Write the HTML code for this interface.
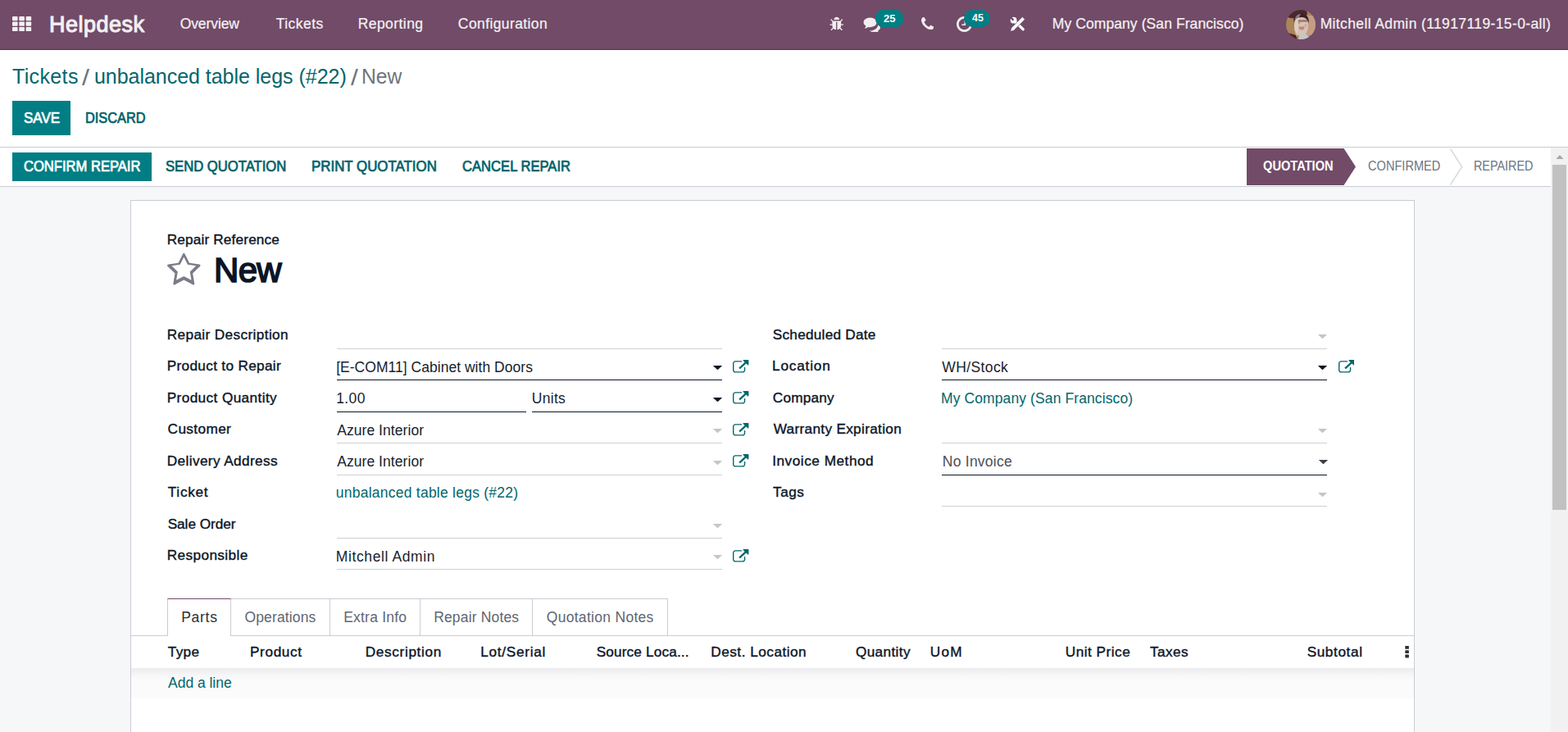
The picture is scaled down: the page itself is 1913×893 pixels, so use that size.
<!DOCTYPE html>
<html lang="en"><head><meta charset="utf-8"><title>Odoo - New</title>
<style>
html,body{margin:0;padding:0}
body{width:1913px;height:893px;overflow:hidden;position:relative;background:#fff;font-family:"Liberation Sans", sans-serif;}
.bx,.t,.ic{position:absolute;display:block}
.t{white-space:pre;line-height:1;margin:0;padding:0;transform-origin:0 0}
.m{-webkit-text-stroke:0.022em currentColor}
.b{font-weight:700}
.n{-webkit-text-stroke:0.014em currentColor}
.mm{-webkit-text-stroke:0.04em currentColor}
</style></head><body>

<main>
<div class="bx" style="left:0px;top:180px;width:1913px;height:713px;background:#f6f7f9;"></div>
<div class="bx" style="left:159px;top:244px;width:1567px;height:660px;background:#fff;border:1px solid #c9ccd3;box-sizing:border-box;"></div>
</main>
<nav>
<div class="bx" style="left:0px;top:0px;width:1913px;height:60px;background:#714B67;"></div>
<div class="bx" style="left:0px;top:60px;width:1913px;height:1px;background:#4f3448;"></div>
<svg class="ic" style="left:14.9px;top:19.9px" width="24" height="19" viewBox="0 0 24 19" ><rect x="0.00" y="0.00" width="6.6" height="5.2" rx="0.9" fill="#f3eff2"/><rect x="8.30" y="0.00" width="6.6" height="5.2" rx="0.9" fill="#f3eff2"/><rect x="16.60" y="0.00" width="6.6" height="5.2" rx="0.9" fill="#f3eff2"/><rect x="0.00" y="6.45" width="6.6" height="5.2" rx="0.9" fill="#f3eff2"/><rect x="8.30" y="6.45" width="6.6" height="5.2" rx="0.9" fill="#f3eff2"/><rect x="16.60" y="6.45" width="6.6" height="5.2" rx="0.9" fill="#f3eff2"/><rect x="0.00" y="12.90" width="6.6" height="5.2" rx="0.9" fill="#f3eff2"/><rect x="8.30" y="12.90" width="6.6" height="5.2" rx="0.9" fill="#f3eff2"/><rect x="16.60" y="12.90" width="6.6" height="5.2" rx="0.9" fill="#f3eff2"/></svg>
<span id="brand" class="t mm" style="left:60.04px;top:16.75px;font-size:27px;color:#f3eff2;letter-spacing:0.486px">Helpdesk</span><span id="m1" class="t n" style="left:219.66px;top:20.50px;font-size:17.5px;color:#f3eff2;letter-spacing:-0.084px">Overview</span><span id="m2" class="t n" style="left:336.76px;top:20.50px;font-size:17.5px;color:#f3eff2;letter-spacing:0.456px">Tickets</span><span id="m3" class="t n" style="left:436.64px;top:20.50px;font-size:17.5px;color:#f3eff2;letter-spacing:0.446px">Reporting</span><span id="m4" class="t n" style="left:558.86px;top:20.50px;font-size:17.5px;color:#f3eff2;letter-spacing:0.397px">Configuration</span>
<svg class="ic" style="left:1012px;top:19.5px" width="17.5" height="17.5" viewBox="0 0 1664 1664" ><path d="M1632 960q0 26-19 45t-45 19h-224q0 171-67 290l208 209q19 19 19 45t-19 45q-18 19-45 19t-45-19l-198-197q-5 5-15 13t-42 28.500-65 36.500-82 29-97 13v-896h-128v896q-51 0-101.500-13.500t-87-33-66-39-43.500-32.500l-15-14-183 207q-20 21-48 21-24 0-43-16-19-18-20.500-44.500t15.500-46.500l202-227q-58-114-58-274h-224q-26 0-45-19t-19-45 19-45 45-19h224v-294l-173-173q-19-19-19-45t19-45 45-19 45 19l173 173h844l173-173q19-19 45-19t45 19 19 45-19 45l-173 173v294h224q26 0 45 19t19 45zM1152 384h-640q0-133 93.500-226.500t226.500-93.500 226.500 93.500 93.500 226.500z" fill="#f1edf0"/></svg>
<svg class="ic" style="left:1053px;top:20.2px" width="21.5" height="19" viewBox="0 128 1792 1664" ><path d="M1408 768q0 139-94 257t-256.500 186.500-353.500 68.500q-86 0-176-16-124 88-278 128-36 9-86 16h-3q-11 0-20.500-8t-11.500-21q-1-3-1-6.500t.5-6.500 2-6l2.500-5 3.500-5.500 4-5 4.500-5 4-4.500q5-6 23-25t26-29.500 22.500-29 25-38.500 20.500-44q-124-72-195-177t-71-224q0-139 94-257t256.500-186.500 353.500-68.500 353.500 68.500 256.500 186.500 94 257zM1792 1280q0 120-71 224.500t-195 176.500q10 24 20.500 44t25 38.500 22.500 29 26 29.500 23 25q1 1 4 4.500t4.500 5 4 5 3.500 5.500l2.500 5 2 6 .5 6.500-1 6.500q-3 14-13 22t-22 7q-50-7-86-16-154-40-278-128-90 16-176 16-271 0-472-132 58 4 88 4 161 0 309-45t264-129q125-92 192-212t67-254q0-77-23-152 129 71 204 178t75 230z" fill="#f1edf0"/></svg>
<svg class="ic" style="left:1124px;top:20.7px" width="15.3" height="15.3" viewBox="0 128 1408 1408" ><path d="M1408 1240q0 27-10 70.500t-21 68.500q-21 50-122 106-94 51-186 51-27 0-52.500-3.500t-57.500-12.500-47.500-14.500-55.500-20.500-49-18q-98-35-175-83-128-79-264.500-215.500t-215.500-264.500q-48-77-83-175-3-9-18-49t-20.500-55.500-14.500-47.500-12.500-57.500-3.500-52.500q0-92 51-186 56-101 106-122 25-11 68.500-21t70.500-10q14 0 21 3 18 6 53 76 11 19 30 54t35 63.500 31 53.500q3 4 17.500 25t21.500 35.500 7 28.500q0 20-28.500 50t-62 55-62 53-28.500 46q0 9 5 22.500t8.500 20.500 14 24 11.500 19q76 137 174 235t235 174q2 1 19 11.500t24 14 20.500 8.500 22.500 5q18 0 46-28.500t53-62 55-62 50-28.500q14 0 28.500 7t35.500 21.500 25 17.500q25 15 53.500 31t63.500 35 54 30q70 35 76 53 3 7 3 21z" fill="#f1edf0"/></svg>
<svg class="ic" style="left:1167px;top:20px" width="19" height="19" viewBox="0 128 1536 1536" ><path d="M896 544v448q0 14-9 23t-23 9h-320q-14 0-23-9t-9-23v-64q0-14 9-23t23-9h224v-352q0-14 9-23t23-9h64q14 0 23 9t9 23zM1312 896q0-148-73-273t-198-198-273-73-273 73-198 198-73 273 73 273 198 198 273 73 273-73 198-198 73-273zM1536 896q0 209-103 385.500t-279.500 279.500-385.500 103-385.500-103-279.500-279.500-103-385.500 103-385.500 279.500-279.500 385.500-103 385.500 103 279.500 279.500 103 385.500z" fill="#f1edf0"/></svg>
<svg class="ic" style="left:1232px;top:20px" width="19" height="19" viewBox="0 0 19 19" ><path d="M4.400 4.400L16.200 15.800" stroke="#fff" stroke-width="3.300" stroke-linecap="round" fill="none"/><circle cx="4.600" cy="4.700" r="3.900" fill="#fff"/><path d="M-0.500 -0.400L3.700 3.800" stroke="#714B67" stroke-width="2.500" stroke-linecap="round"/><path d="M15.300 0.600L18.400 3.700L4.900 17.200L0.700 18.300L1.800 14.100z" fill="#fff" stroke="#714B67" stroke-width="0.700" stroke-linejoin="round"/></svg>
<div class="bx" style="left:1068px;top:11px;width:34px;height:22.5px;background:#017e84;border-radius:11.5px;"></div>
<div class="bx" style="left:1176px;top:12px;width:32px;height:21.3px;background:#017e84;border-radius:10.6px;"></div>
<span id="b25" class="t b" style="left:1078.00px;top:16.00px;font-size:13.5px;color:#fff;transform:scaleX(0.9672)">25</span><span id="b45" class="t b" style="left:1185.60px;top:14.90px;font-size:13.5px;color:#fff;transform:scaleX(0.9221)">45</span>
<span id="comp" class="t n" style="left:1283.73px;top:20.50px;font-size:17.5px;color:#f3eff2;letter-spacing:0.089px">My Company (San Francisco)</span>
<svg class="ic" style="left:1568.7px;top:11.7px" width="36" height="36" viewBox="0 0 36 36" ><defs><clipPath id="av"><circle cx="18" cy="18" r="18"/></clipPath></defs>
<g clip-path="url(#av)"><rect width="36" height="36" fill="#ab8457"/>
<rect x="23" y="7" width="13" height="24" fill="#c59c85"/>
<ellipse cx="11" cy="4" rx="15" ry="6.500" fill="#4a2730"/>
<path d="M2 28q4 8 12 9l-2-6z" fill="#4a2228"/>
<ellipse cx="18.500" cy="19.500" rx="8.500" ry="13" fill="#d8c2b3"/>
<path d="M9.500 15q-1-10.500 9.500-10.500q9 0 9 12.500q-2-8-9-8q-7 0-9.500 6z" fill="#3d1f29"/>
<path d="M11 10q2-5 7-5q-3 4-3 16q-2 6-1 12q-4-3-4-12z" fill="#e6e1e1" opacity=".45"/>
<rect x="14.500" y="12.300" width="12" height="2.400" rx="1.200" fill="#6e4a3e" opacity=".6"/>
<path d="M15.500 20q3.500 1 7 0q0 4.500-3.500 4.500q-3.500 0-3.500-4.500z" fill="#a8575f" opacity=".55"/><circle cx="16" cy="16" r="1.600" fill="#c98a4a" opacity=".6"/><circle cx="24" cy="19" r="1.500" fill="#d9945a" opacity=".6"/>
<path d="M15 36q0-7 6-7q7 1 8 7z" fill="#c3c7cb"/></g></svg>
<span id="user" class="t n" style="left:1610.64px;top:20.50px;font-size:17.5px;color:#f3eff2;letter-spacing:0.379px">Mitchell Admin (11917119-15-0-all)</span>
</nav>
<header>
<span id="bc1" class="t r" style="left:14.98px;top:81.00px;font-size:25px;color:#01666b;letter-spacing:0.367px">Tickets</span><span id="bc2" class="t r" style="left:100.40px;top:80.50px;font-size:27.5px;color:#6c757d;transform:scaleX(1.1842)">/</span><span id="bc3" class="t r" style="left:114.89px;top:81.00px;font-size:25px;color:#01666b;letter-spacing:-0.027px">unbalanced table legs (#22)</span><span id="bc4" class="t r" style="left:428.01px;top:80.50px;font-size:27.5px;color:#6c757d;transform:scaleX(1.1543)">/</span><span id="bc5" class="t r" style="left:441.47px;top:81.00px;font-size:25px;color:#6c757d;transform:scaleX(0.9871)">New</span>
<div class="bx" style="left:15px;top:123px;width:71px;height:42px;background:#017e84;"></div>
<span id="save" class="t mm" style="left:28.59px;top:136.00px;font-size:17.5px;color:#fff;transform:scaleX(0.9731)">SAVE</span><span id="discard" class="t mm" style="left:104.42px;top:136.00px;font-size:17.5px;color:#01626a;transform:scaleX(0.9349)">DISCARD</span>
<div class="bx" style="left:0px;top:179px;width:1913px;height:1px;background:#c9ccd3;"></div>
<div class="bx" style="left:0px;top:180px;width:1892px;height:47px;background:#fff;"></div>
<div class="bx" style="left:0px;top:227px;width:1892px;height:1px;background:#c9ccd3;"></div>
<div class="bx" style="left:15px;top:186px;width:170px;height:35px;background:#017e84;"></div>
<span id="confirm" class="t mm" style="left:28.55px;top:194.75px;font-size:17.5px;color:#fff;transform:scaleX(0.9468)">CONFIRM REPAIR</span><span id="send" class="t mm" style="left:202.12px;top:194.75px;font-size:17.5px;color:#01626a;transform:scaleX(0.9508)">SEND QUOTATION</span><span id="print" class="t mm" style="left:380.39px;top:194.75px;font-size:17.5px;color:#01626a;transform:scaleX(0.9644)">PRINT QUOTATION</span><span id="cancel" class="t mm" style="left:564.44px;top:194.75px;font-size:17.5px;color:#01626a;transform:scaleX(0.9495)">CANCEL REPAIR</span>
<svg class="ic" style="left:1521px;top:181px" width="134" height="45" viewBox="0 0 134 45" ><path d="M0 0H118.500L133 22.500L118.500 45H0z" fill="#714B67"/></svg>
<svg class="ic" style="left:1766px;top:181px" width="20" height="45" viewBox="0 0 20 45" ><path d="M3.500 0.500L17.500 22.500L3.500 44.500" fill="none" stroke="#cfd2da" stroke-width="1.300"/></svg>
<span id="st1" class="t b" style="left:1541.42px;top:193.75px;font-size:16.25px;color:#fff;transform:scaleX(0.9006)">QUOTATION</span><span id="st2" class="t r" style="left:1668.95px;top:193.75px;font-size:16.25px;color:#6c7480;transform:scaleX(0.8979)">CONFIRMED</span><span id="st3" class="t r" style="left:1798.38px;top:193.75px;font-size:16.25px;color:#6c7480;transform:scaleX(0.8839)">REPAIRED</span>
</header>
<section>
<span id="lref" class="t m" style="left:203.74px;top:283.50px;font-size:17.2px;color:#0b1526;letter-spacing:0.165px">Repair Reference</span>
<svg class="ic" style="left:204px;top:306.5px" width="40.6" height="43.75" viewBox="0 0 1664 1792" ><path d="M1137 1004l306-297-422-62-189-382-189 382-422 62 306 297-73 421 378-199 377 199zM1664 685q0 22-26 48l-363 354 86 500q1 7 1 20 0 50-41 50-19 0-40-12l-449-236-449 236q-22 12-40 12-21 0-31.500-14.500t-10.500-35.500q0-6 2-20l86-500-364-354q-25-27-25-48 0-37 56-46l502-73 225-455q19-41 49-41t49 41l225 455 502 73q56 9 56 46z" fill="#7c7b87"/></svg>
<span id="h1" class="t mm" style="left:260.97px;top:309.00px;font-size:42px;color:#0b1526;letter-spacing:-0.660px">New</span>
<span id="l0" class="t m" style="left:203.74px;top:400.00px;font-size:17.2px;color:#0b1526;letter-spacing:0.383px">Repair Description</span>
<span id="l1" class="t m" style="left:203.74px;top:438.00px;font-size:17.2px;color:#0b1526;letter-spacing:0.328px">Product to Repair</span>
<span id="l2" class="t m" style="left:203.74px;top:477.00px;font-size:17.2px;color:#0b1526;letter-spacing:0.393px">Product Quantity</span>
<span id="l3" class="t m" style="left:204.61px;top:515.00px;font-size:17.2px;color:#0b1526;letter-spacing:0.385px">Customer</span>
<span id="l4" class="t m" style="left:203.74px;top:554.00px;font-size:17.2px;color:#0b1526;letter-spacing:0.395px">Delivery Address</span>
<span id="l5" class="t m" style="left:204.75px;top:592.00px;font-size:17.2px;color:#0b1526;letter-spacing:0.737px">Ticket</span>
<span id="l6" class="t m" style="left:204.63px;top:631.00px;font-size:17.2px;color:#0b1526;letter-spacing:-0.029px">Sale Order</span>
<span id="l7" class="t m" style="left:203.74px;top:669.00px;font-size:17.2px;color:#0b1526;letter-spacing:0.394px">Responsible</span>
<span id="v1" class="t r" style="left:410.18px;top:440.00px;font-size:17.5px;color:#171e2c;letter-spacing:0.029px">[E-COM11] Cabinet with Doors</span>
<span id="v2" class="t r" style="left:410.22px;top:478.00px;font-size:17.5px;color:#171e2c;letter-spacing:0.370px">1.00</span>
<span id="v2b" class="t r" style="left:648.87px;top:478.00px;font-size:17.5px;color:#171e2c;letter-spacing:0.286px">Units</span>
<span id="v3" class="t r" style="left:411.16px;top:517.00px;font-size:17.5px;color:#171e2c;letter-spacing:0.065px">Azure Interior</span>
<span id="v4" class="t r" style="left:411.16px;top:555.00px;font-size:17.5px;color:#171e2c;letter-spacing:0.065px">Azure Interior</span>
<span id="v5" class="t r" style="left:409.74px;top:593.00px;font-size:17.5px;color:#01666b;letter-spacing:0.246px">unbalanced table legs (#22)</span>
<span id="v7" class="t r" style="left:409.81px;top:671.00px;font-size:17.5px;color:#171e2c;letter-spacing:0.607px">Mitchell Admin</span>
<div class="bx" style="left:410.5px;top:425px;width:470.5px;height:1px;background:#cfd1d6;"></div>
<div class="bx" style="left:410.5px;top:463px;width:470.5px;height:1px;background:#0b1526;"></div>
<div class="bx" style="left:410.5px;top:502px;width:231.25px;height:1px;background:#0b1526;"></div>
<div class="bx" style="left:649.25px;top:502px;width:231.75px;height:1px;background:#0b1526;"></div>
<div class="bx" style="left:410.5px;top:540px;width:470.5px;height:1px;background:#cfd1d6;"></div>
<div class="bx" style="left:410.5px;top:579px;width:470.5px;height:1px;background:#cfd1d6;"></div>
<div class="bx" style="left:410.5px;top:656px;width:470.5px;height:1px;background:#cfd1d6;"></div>
<div class="bx" style="left:410.5px;top:694px;width:470.5px;height:1px;background:#cfd1d6;"></div>
<svg class="ic" style="left:870px;top:445.8px" width="11" height="5.2" viewBox="0 0 11 6" preserveAspectRatio="none"><path d="M0.6 0h9.8q0.9 0 0.3 0.7l-4.6 4.9q-0.6 0.6-1.2 0l-4.6-4.9q-0.6-0.7 0.3-0.7z" fill="#0b1526"/></svg>
<svg class="ic" style="left:894.25px;top:438.7px" width="19.4" height="16.8" viewBox="0 0 1792 1664" preserveAspectRatio="none"><path d="M1408 928v320q0 119-84.500 203.500t-203.500 84.500h-832q-119 0-203.500-84.500t-84.500-203.500v-832q0-119 84.500-203.500t203.500-84.500h704q14 0 23 9t9 23v64q0 14-9 23t-23 9h-704q-66 0-113 47t-47 113v832q0 66 47 113t113 47h832q66 0 113-47t47-113v-320q0-14 9-23t23-9h64q14 0 23 9t9 23zM1792 64v512q0 26-19 45t-45 19-45-19l-176-176-652 652q-10 10-23 10t-23-10l-114-114q-10-10-10-23t10-23l652-652-176-176q-19-19-19-45t19-45 45-19h512q26 0 45 19t19 45z" fill="#01666b"/></svg>
<svg class="ic" style="left:870px;top:484.8px" width="11" height="5.2" viewBox="0 0 11 6" preserveAspectRatio="none"><path d="M0.6 0h9.8q0.9 0 0.3 0.7l-4.6 4.9q-0.6 0.6-1.2 0l-4.6-4.9q-0.6-0.7 0.3-0.7z" fill="#0b1526"/></svg>
<svg class="ic" style="left:894.25px;top:477.2px" width="19.4" height="16.8" viewBox="0 0 1792 1664" preserveAspectRatio="none"><path d="M1408 928v320q0 119-84.500 203.500t-203.500 84.500h-832q-119 0-203.500-84.500t-84.500-203.500v-832q0-119 84.500-203.500t203.500-84.500h704q14 0 23 9t9 23v64q0 14-9 23t-23 9h-704q-66 0-113 47t-47 113v832q0 66 47 113t113 47h832q66 0 113-47t47-113v-320q0-14 9-23t23-9h64q14 0 23 9t9 23zM1792 64v512q0 26-19 45t-45 19-45-19l-176-176-652 652q-10 10-23 10t-23-10l-114-114q-10-10-10-23t10-23l652-652-176-176q-19-19-19-45t19-45 45-19h512q26 0 45 19t19 45z" fill="#01666b"/></svg>
<svg class="ic" style="left:870px;top:523.3px" width="11" height="5.2" viewBox="0 0 11 6" preserveAspectRatio="none"><path d="M0.6 0h9.8q0.9 0 0.3 0.7l-4.6 4.9q-0.6 0.6-1.2 0l-4.6-4.9q-0.6-0.7 0.3-0.7z" fill="#c4c6cb"/></svg>
<svg class="ic" style="left:894.25px;top:515.7px" width="19.4" height="16.8" viewBox="0 0 1792 1664" preserveAspectRatio="none"><path d="M1408 928v320q0 119-84.500 203.500t-203.500 84.500h-832q-119 0-203.500-84.500t-84.500-203.500v-832q0-119 84.500-203.500t203.500-84.500h704q14 0 23 9t9 23v64q0 14-9 23t-23 9h-704q-66 0-113 47t-47 113v832q0 66 47 113t113 47h832q66 0 113-47t47-113v-320q0-14 9-23t23-9h64q14 0 23 9t9 23zM1792 64v512q0 26-19 45t-45 19-45-19l-176-176-652 652q-10 10-23 10t-23-10l-114-114q-10-10-10-23t10-23l652-652-176-176q-19-19-19-45t19-45 45-19h512q26 0 45 19t19 45z" fill="#01666b"/></svg>
<svg class="ic" style="left:870px;top:561.8px" width="11" height="5.2" viewBox="0 0 11 6" preserveAspectRatio="none"><path d="M0.6 0h9.8q0.9 0 0.3 0.7l-4.6 4.9q-0.6 0.6-1.2 0l-4.6-4.9q-0.6-0.7 0.3-0.7z" fill="#c4c6cb"/></svg>
<svg class="ic" style="left:894.25px;top:554.2px" width="19.4" height="16.8" viewBox="0 0 1792 1664" preserveAspectRatio="none"><path d="M1408 928v320q0 119-84.500 203.500t-203.500 84.500h-832q-119 0-203.500-84.500t-84.500-203.500v-832q0-119 84.500-203.500t203.500-84.500h704q14 0 23 9t9 23v64q0 14-9 23t-23 9h-704q-66 0-113 47t-47 113v832q0 66 47 113t113 47h832q66 0 113-47t47-113v-320q0-14 9-23t23-9h64q14 0 23 9t9 23zM1792 64v512q0 26-19 45t-45 19-45-19l-176-176-652 652q-10 10-23 10t-23-10l-114-114q-10-10-10-23t10-23l652-652-176-176q-19-19-19-45t19-45 45-19h512q26 0 45 19t19 45z" fill="#01666b"/></svg>
<svg class="ic" style="left:870px;top:638.8px" width="11" height="5.2" viewBox="0 0 11 6" preserveAspectRatio="none"><path d="M0.6 0h9.8q0.9 0 0.3 0.7l-4.6 4.9q-0.6 0.6-1.2 0l-4.6-4.9q-0.6-0.7 0.3-0.7z" fill="#c4c6cb"/></svg>
<svg class="ic" style="left:870px;top:676.8px" width="11" height="5.2" viewBox="0 0 11 6" preserveAspectRatio="none"><path d="M0.6 0h9.8q0.9 0 0.3 0.7l-4.6 4.9q-0.6 0.6-1.2 0l-4.6-4.9q-0.6-0.7 0.3-0.7z" fill="#c4c6cb"/></svg>
<svg class="ic" style="left:894.25px;top:669.7px" width="19.4" height="16.8" viewBox="0 0 1792 1664" preserveAspectRatio="none"><path d="M1408 928v320q0 119-84.500 203.500t-203.500 84.500h-832q-119 0-203.500-84.500t-84.500-203.500v-832q0-119 84.500-203.500t203.500-84.500h704q14 0 23 9t9 23v64q0 14-9 23t-23 9h-704q-66 0-113 47t-47 113v832q0 66 47 113t113 47h832q66 0 113-47t47-113v-320q0-14 9-23t23-9h64q14 0 23 9t9 23zM1792 64v512q0 26-19 45t-45 19-45-19l-176-176-652 652q-10 10-23 10t-23-10l-114-114q-10-10-10-23t10-23l652-652-176-176q-19-19-19-45t19-45 45-19h512q26 0 45 19t19 45z" fill="#01666b"/></svg>
<span id="r0" class="t m" style="left:942.83px;top:400.00px;font-size:17.2px;color:#0b1526;letter-spacing:0.241px">Scheduled Date</span>
<span id="r1" class="t m" style="left:942.03px;top:438.00px;font-size:17.2px;color:#0b1526;letter-spacing:0.820px">Location</span>
<span id="r2" class="t m" style="left:942.80px;top:477.00px;font-size:17.2px;color:#0b1526;letter-spacing:0.216px">Company</span>
<span id="r3" class="t m" style="left:943.66px;top:515.00px;font-size:17.2px;color:#0b1526;letter-spacing:0.323px">Warranty Expiration</span>
<span id="r4" class="t m" style="left:942.16px;top:554.00px;font-size:17.2px;color:#0b1526;letter-spacing:0.534px">Invoice Method</span>
<span id="r5" class="t m" style="left:943.06px;top:592.00px;font-size:17.2px;color:#0b1526;letter-spacing:0.502px">Tags</span>
<span id="w1" class="t r" style="left:1149.25px;top:440.00px;font-size:17.5px;color:#171e2c;letter-spacing:0.398px">WH/Stock</span>
<span id="w2" class="t r" style="left:1148.03px;top:478.00px;font-size:17.5px;color:#01666b;letter-spacing:0.105px">My Company (San Francisco)</span>
<span id="w4" class="t r" style="left:1149.83px;top:555.00px;font-size:17.5px;color:#495057;letter-spacing:0.240px">No Invoice</span>
<div class="bx" style="left:1149px;top:425px;width:470px;height:1px;background:#cfd1d6;"></div>
<div class="bx" style="left:1149px;top:463px;width:470px;height:1px;background:#0b1526;"></div>
<div class="bx" style="left:1149px;top:540px;width:470px;height:1px;background:#cfd1d6;"></div>
<div class="bx" style="left:1149px;top:579px;width:470px;height:1px;background:#0b1526;"></div>
<div class="bx" style="left:1149px;top:617px;width:470px;height:1px;background:#cfd1d6;"></div>
<svg class="ic" style="left:1608px;top:408.3px" width="11" height="5.2" viewBox="0 0 11 6" preserveAspectRatio="none"><path d="M0.6 0h9.8q0.9 0 0.3 0.7l-4.6 4.9q-0.6 0.6-1.2 0l-4.6-4.9q-0.6-0.7 0.3-0.7z" fill="#c4c6cb"/></svg>
<svg class="ic" style="left:1608px;top:446.3px" width="11" height="5.2" viewBox="0 0 11 6" preserveAspectRatio="none"><path d="M0.6 0h9.8q0.9 0 0.3 0.7l-4.6 4.9q-0.6 0.6-1.2 0l-4.6-4.9q-0.6-0.7 0.3-0.7z" fill="#0b1526"/></svg>
<svg class="ic" style="left:1633px;top:438.7px" width="19.4" height="16.8" viewBox="0 0 1792 1664" preserveAspectRatio="none"><path d="M1408 928v320q0 119-84.500 203.500t-203.500 84.500h-832q-119 0-203.500-84.500t-84.500-203.500v-832q0-119 84.500-203.500t203.500-84.500h704q14 0 23 9t9 23v64q0 14-9 23t-23 9h-704q-66 0-113 47t-47 113v832q0 66 47 113t113 47h832q66 0 113-47t47-113v-320q0-14 9-23t23-9h64q14 0 23 9t9 23zM1792 64v512q0 26-19 45t-45 19-45-19l-176-176-652 652q-10 10-23 10t-23-10l-114-114q-10-10-10-23t10-23l652-652-176-176q-19-19-19-45t19-45 45-19h512q26 0 45 19t19 45z" fill="#01666b"/></svg>
<svg class="ic" style="left:1608px;top:523.3px" width="11" height="5.2" viewBox="0 0 11 6" preserveAspectRatio="none"><path d="M0.6 0h9.8q0.9 0 0.3 0.7l-4.6 4.9q-0.6 0.6-1.2 0l-4.6-4.9q-0.6-0.7 0.3-0.7z" fill="#c4c6cb"/></svg>
<svg class="ic" style="left:1608.5px;top:560.8px" width="11" height="5.2" viewBox="0 0 11 6" preserveAspectRatio="none"><path d="M0.6 0h9.8q0.9 0 0.3 0.7l-4.6 4.9q-0.6 0.6-1.2 0l-4.6-4.9q-0.6-0.7 0.3-0.7z" fill="#3c4148"/></svg>
<svg class="ic" style="left:1608px;top:601.3px" width="11" height="5.2" viewBox="0 0 11 6" preserveAspectRatio="none"><path d="M0.6 0h9.8q0.9 0 0.3 0.7l-4.6 4.9q-0.6 0.6-1.2 0l-4.6-4.9q-0.6-0.7 0.3-0.7z" fill="#c4c6cb"/></svg>
</section>
<section>
<div class="bx" style="left:160px;top:775px;width:1565px;height:1px;background:#c9ccd3;"></div>
<div class="bx" style="left:204px;top:730px;width:611px;height:46px;background:transparent;border:1px solid #c9ccd3;border-bottom:none;box-sizing:border-box;"></div>
<div class="bx" style="left:204px;top:730px;width:78px;height:46px;background:#fff;border:1px solid #c9ccd3;border-top-color:#714B67;border-bottom:none;box-sizing:border-box;"></div>
<div class="bx" style="left:402px;top:731px;width:1px;height:44px;background:#c9ccd3;"></div>
<div class="bx" style="left:512px;top:731px;width:1px;height:44px;background:#c9ccd3;"></div>
<div class="bx" style="left:649px;top:731px;width:1px;height:44px;background:#c9ccd3;"></div>
<span id="t1" class="t r" style="left:221.15px;top:745.00px;font-size:17.5px;color:#2b3038;letter-spacing:0.724px">Parts</span>
<span id="t2" class="t r" style="left:298.43px;top:745.00px;font-size:17.5px;color:#5f6672;letter-spacing:0.142px">Operations</span>
<span id="t3" class="t r" style="left:419.16px;top:745.00px;font-size:17.5px;color:#5f6672;letter-spacing:0.227px">Extra Info</span>
<span id="t4" class="t r" style="left:529.16px;top:745.00px;font-size:17.5px;color:#5f6672;letter-spacing:0.160px">Repair Notes</span>
<span id="t5" class="t r" style="left:666.76px;top:745.00px;font-size:17.5px;color:#5f6672;letter-spacing:0.296px">Quotation Notes</span>
<span id="h_type" class="t m" style="left:204.75px;top:787.00px;font-size:17.2px;color:#0b1526;letter-spacing:0.343px">Type</span>
<span id="h_prod" class="t m" style="left:305.03px;top:787.00px;font-size:17.2px;color:#0b1526;letter-spacing:0.629px">Product</span>
<span id="h_desc" class="t m" style="left:445.74px;top:787.00px;font-size:17.2px;color:#0b1526;letter-spacing:0.659px">Description</span>
<span id="h_lot" class="t m" style="left:586.32px;top:787.00px;font-size:17.2px;color:#0b1526;letter-spacing:0.720px">Lot/Serial</span>
<span id="h_src" class="t m" style="left:727.63px;top:787.00px;font-size:17.2px;color:#0b1526;letter-spacing:0.159px">Source Loca...</span>
<span id="h_dst" class="t m" style="left:867.32px;top:787.00px;font-size:17.2px;color:#0b1526;letter-spacing:0.496px">Dest. Location</span>
<span id="h_qty" class="t m" style="left:1043.91px;top:787.00px;font-size:17.2px;color:#0b1526;letter-spacing:0.373px">Quantity</span>
<span id="h_uom" class="t m" style="left:1134.78px;top:787.00px;font-size:17.2px;color:#0b1526;letter-spacing:1.258px">UoM</span>
<span id="h_up" class="t m" style="left:1299.78px;top:787.00px;font-size:17.2px;color:#0b1526;letter-spacing:0.499px">Unit Price</span>
<span id="h_tax" class="t m" style="left:1403.06px;top:787.00px;font-size:17.2px;color:#0b1526;letter-spacing:0.398px">Taxes</span>
<span id="h_sub" class="t m" style="left:1594.63px;top:787.00px;font-size:17.2px;color:#0b1526;letter-spacing:0.612px">Subtotal</span>
<svg class="ic" style="left:1713.5px;top:788px" width="5.5" height="14.5" viewBox="0 0 5.500 14.500" ><rect x="0.3" y="0" width="4.6" height="3.800" rx=".6" fill="#2b3038"/><rect x="0.3" y="5.300" width="4.600" height="3.800" rx=".6" fill="#2b3038"/><rect x="0.3" y="10.600" width="4.600" height="3.800" rx=".6" fill="#2b3038"/></svg>
<div class="bx" style="left:160px;top:815px;width:1565px;height:37px;background:#fafafb;background:linear-gradient(#ececee 0,#f0f0f2 4px,#f7f7f8 9px,#fbfbfb 15px,#fbfbfb 100%);"></div>
<span id="add" class="t r" style="left:205.03px;top:825.00px;font-size:17.5px;color:#01666b;letter-spacing:-0.020px">Add a line</span>
</section>
<div class="bx" style="left:1892px;top:180px;width:21px;height:713px;background:#f1f1f1;"></div>
<div class="bx" style="left:1894px;top:201px;width:17px;height:421px;background:#c1c1c1;"></div>
<svg class="ic" style="left:1897.5px;top:188.5px" width="10" height="5.5" viewBox="0 0 10 5.500" ><path d="M5 0L10 5.500H0z" fill="#a3a9ae"/></svg>
</body></html>
